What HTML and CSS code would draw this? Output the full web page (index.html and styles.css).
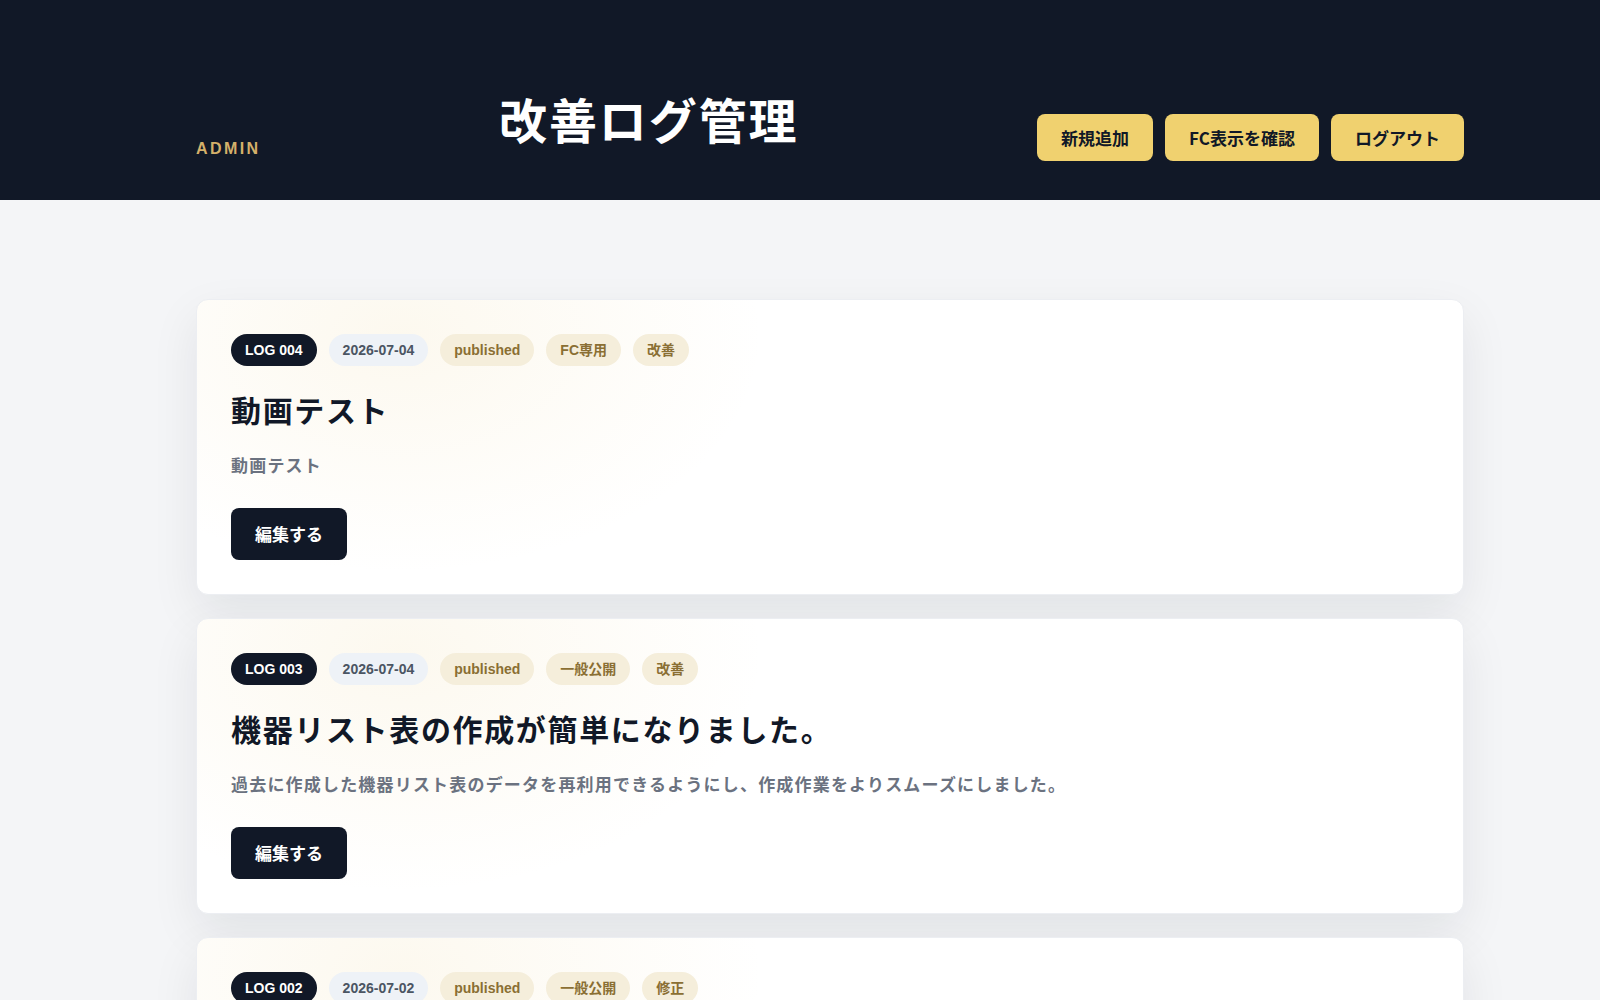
FILE: index.html
```html
<!DOCTYPE html>
<html lang="ja">
<head>
  <meta charset="UTF-8">
  <title>改善ログ管理</title>
  <link rel="stylesheet" href="styles.css">
</head>
<body>
  <header class="topbar">
    <div class="topbar-inner">
      <span class="eyebrow">ADMIN</span>
      <h1>改善ログ管理</h1>
      <nav class="actions">
        <a href="#" class="btn-gold">新規追加</a>
        <a href="#" class="btn-gold">FC表示を確認</a>
        <a href="#" class="btn-gold">ログアウト</a>
      </nav>
    </div>
  </header>

  <main class="list">
    <article class="log-card">
      <div class="chips">
        <span class="chip chip-id">LOG 004</span>
        <span class="chip chip-date">2026-07-04</span>
        <span class="chip chip-tag">published</span>
        <span class="chip chip-tag">FC専用</span>
        <span class="chip chip-tag">改善</span>
      </div>
      <h2>動画テスト</h2>
      <p class="summary">動画テスト</p>
      <a href="#" class="btn-edit">編集する</a>
    </article>

    <article class="log-card">
      <div class="chips">
        <span class="chip chip-id">LOG 003</span>
        <span class="chip chip-date">2026-07-04</span>
        <span class="chip chip-tag">published</span>
        <span class="chip chip-tag">一般公開</span>
        <span class="chip chip-tag">改善</span>
      </div>
      <h2>機器リスト表の作成が簡単になりました。</h2>
      <p class="summary">過去に作成した機器リスト表のデータを再利用できるようにし、作成作業をよりスムーズにしました。</p>
      <a href="#" class="btn-edit">編集する</a>
    </article>

    <article class="log-card">
      <div class="chips">
        <span class="chip chip-id">LOG 002</span>
        <span class="chip chip-date">2026-07-02</span>
        <span class="chip chip-tag">published</span>
        <span class="chip chip-tag">一般公開</span>
        <span class="chip chip-tag">修正</span>
      </div>
      <h2>一覧画面の表示を修正しました。</h2>
      <p class="summary">一部の環境で一覧が正しく表示されない問題を修正しました。</p>
      <a href="#" class="btn-edit">編集する</a>
    </article>
  </main>
</body>
</html>
```

FILE: styles.css
```css
* {
  box-sizing: border-box;
}

body {
  margin: 0;
  font-family: "Liberation Sans", "Noto Sans CJK JP", sans-serif;
  background: #f4f5f7;
  color: #111827;
}

a {
  text-decoration: none;
}

/* header */
.topbar {
  background: #111827;
  padding: 90px 0 39px;
}

.topbar-inner {
  width: 1268px;
  margin-left: 196px;
  display: flex;
  justify-content: space-between;
  align-items: flex-end;
}

.eyebrow {
  color: #d4b06a;
  font-size: 16px;
  font-weight: 700;
  letter-spacing: 0.15em;
  line-height: 20px;
  margin-bottom: 2px;
}

.topbar h1 {
  margin: 0 0 13px;
  color: #fff;
  font-family: "Noto Sans CJK JP", sans-serif;
  font-size: 48px;
  font-weight: 700;
  letter-spacing: 0.04em;
  line-height: 1.2;
}

.actions {
  display: flex;
  gap: 12px;
}

.btn-gold {
  background: #f0d16f;
  color: #111827;
  font-family: "Noto Sans CJK JP", sans-serif;
  font-size: 17px;
  font-weight: 700;
  line-height: 19px;
  padding: 14px 24px;
  border-radius: 8px;
}

/* log list */
.list {
  width: 1268px;
  margin-left: 196px;
  padding: 99px 0 60px;
  display: flex;
  flex-direction: column;
  gap: 23px;
}

.log-card {
  background:
    radial-gradient(ellipse 520px 340px at 16% 12%, rgba(236, 206, 130, 0.13), rgba(236, 206, 130, 0) 70%),
    #fff;
  border: 1px solid #eceef2;
  border-radius: 12px;
  padding: 34px;
  box-shadow: 0 18px 48px rgba(15, 23, 42, 0.08);
}

.chips {
  display: flex;
  gap: 12px;
}

.chip {
  font-size: 14px;
  font-weight: 700;
  line-height: 18px;
  padding: 7px 14px;
  border-radius: 999px;
}

.chip-id {
  background: #111827;
  color: #fff;
}

.chip-date {
  background: #eef2f7;
  color: #4b5563;
}

.chip-tag {
  background: #f5eedb;
  color: #8a6f33;
}

.log-card h2 {
  margin: 22px 0 0;
  font-family: "Noto Sans CJK JP", sans-serif;
  font-size: 30px;
  font-weight: 700;
  letter-spacing: 0.055em;
  line-height: 42px;
}

.summary {
  margin: 20px 0 29px;
  color: #6b7280;
  font-family: "Noto Sans CJK JP", sans-serif;
  font-size: 17px;
  font-weight: 600;
  letter-spacing: 0.07em;
  line-height: 29px;
}

.btn-edit {
  display: inline-block;
  background: #111827;
  color: #fff;
  font-family: "Noto Sans CJK JP", sans-serif;
  font-size: 17px;
  font-weight: 700;
  line-height: 20px;
  padding: 16px 24px;
  border-radius: 8px;
}
```
